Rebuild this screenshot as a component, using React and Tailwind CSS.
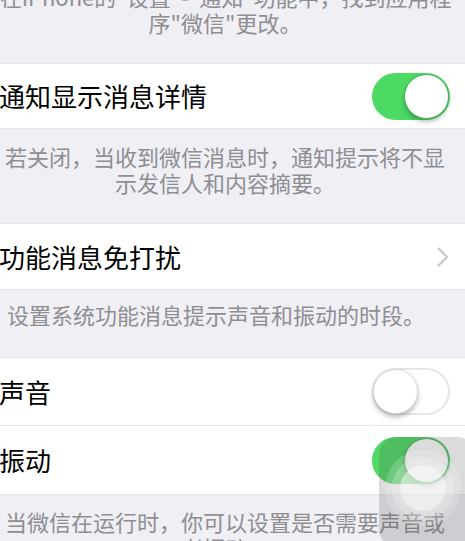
import React from 'react';

const font = { fontFamily: '"Noto Sans CJK SC", "Noto Sans", sans-serif' };

function Toggle({ on }) {
  if (on) {
    return (
      <div className="relative w-[78px] h-[47px] rounded-full bg-[#4cd964] shrink-0">
        <div className="absolute right-[1px] top-[1px] w-[45px] h-[45px] rounded-full bg-white border border-[#3fb653] shadow-[0_3px_4px_rgba(0,0,0,0.25)]" />
      </div>
    );
  }
  return (
    <div className="relative w-[78px] h-[47px] rounded-full bg-white border-2 border-[#e5e5ea] shrink-0">
      <div className="absolute left-[-1px] top-[-1px] w-[45px] h-[45px] rounded-full bg-white border border-[#dcdce0] shadow-[0_3px_5px_rgba(0,0,0,0.28)]" />
    </div>
  );
}

function Row({ title, children, height = 'h-[67px]', border = 'border-y' }) {
  return (
    <div className={`${height} bg-white ${border} border-[#e4e4e9] flex items-center justify-between pr-[15px]`}>
      <span className="text-[26px] leading-[32px] text-black -ml-px whitespace-nowrap">{title}</span>
      {children}
    </div>
  );
}

function Chevron() {
  return (
    <svg width="14" height="22" viewBox="0 0 14 22" className="mr-[0px]">
      <path d="M2.5 2.5 L11 11 L2.5 19.5" fill="none" stroke="#c7c7cc" strokeWidth="2.2" strokeLinecap="round" strokeLinejoin="round" />
    </svg>
  );
}

function AssistiveTouch() {
  return (
    <div className="absolute left-[379px] top-[437px] w-[96px] h-[110px] rounded-[18px] bg-[rgba(90,90,90,0.22)] flex items-start justify-start">
      <svg width="90" height="104" viewBox="0 0 90 104">
        <circle cx="44" cy="51" r="38" fill="rgba(255,255,255,0.18)" />
        <circle cx="44" cy="51" r="31" fill="rgba(255,255,255,0.22)" />
        <circle cx="44" cy="51" r="23" fill="rgba(255,255,255,0.45)" />
      </svg>
    </div>
  );
}

export default function App() {
  return (
    <div className="relative w-[465px] h-[541px] overflow-hidden bg-[#efeff4]" style={font}>
      {/* top footer, first line cut off by the viewport */}
      <div className="mt-[-17px] pb-[28px] pr-[15px] text-center text-[22px] leading-[26px] text-[#8e8e93] whitespace-nowrap">
        <div>在iPhone的"设置"-"通知"功能中，找到应用程</div>
        <div>序"微信"更改。</div>
      </div>

      <Row title="通知显示消息详情" height="h-[66px]">
        <Toggle on />
      </Row>

      <div className="pt-[14px] pb-[28px] pr-[15px] text-center text-[22px] leading-[26px] text-[#8e8e93] whitespace-nowrap">
        <div>若关闭，当收到微信消息时，通知提示将不显</div>
        <div>示发信人和内容摘要。</div>
      </div>

      <Row title="功能消息免打扰">
        <Chevron />
      </Row>

      <div className="pt-[11px] pb-[30px] pl-[7px] text-[22px] leading-[26px] text-[#8e8e93] whitespace-nowrap">
        设置系统功能消息提示声音和振动的时段。
      </div>

      <div className="bg-white border-y border-[#e4e4e9]">
        <div className="h-[68px] border-b border-[#e4e4e9] flex items-center justify-between pr-[15px]">
          <span className="text-[26px] leading-[32px] text-black -ml-px">声音</span>
          <Toggle on={false} />
        </div>
        <div className="h-[68px] flex items-center justify-between pr-[15px]">
          <span className="text-[26px] leading-[32px] text-black -ml-px">振动</span>
          <Toggle on />
        </div>
      </div>

      <div className="pt-[13px] pb-[28px] pr-[15px] text-center text-[22px] leading-[26px] text-[#8e8e93] whitespace-nowrap">
        <div>当微信在运行时，你可以设置是否需要声音或</div>
        <div>者振动。</div>
      </div>

      <AssistiveTouch />
    </div>
  );
}
